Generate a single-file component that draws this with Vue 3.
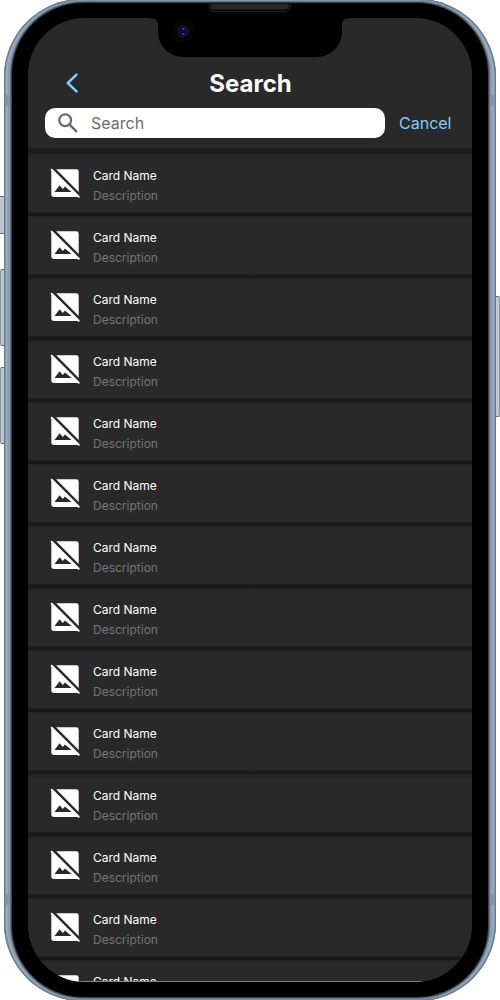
<script setup>
const cards = Array.from({ length: 14 }, (_, i) => ({ id: i, name: 'Card Name', description: 'Description' }))
</script>

<template>
  <main class="stage">
    <i class="key silent"></i>
    <i class="key volume-up"></i>
    <i class="key volume-down"></i>
    <i class="key power"></i>
    <div class="phone">
      <div class="bezel">
        <section class="screen">
          <header class="header">
            <div class="title-row">
              <svg class="back" width="14" height="22" viewBox="0 0 14 22">
                <path d="M11.500 2.700 2.800 11l8.700 8.300" fill="none" stroke="#83c9fb" stroke-width="2.500" stroke-linecap="round" stroke-linejoin="round" />
              </svg>
              <h1>Search</h1>
            </div>
            <div class="search-row">
              <div class="field">
                <svg width="20" height="20" viewBox="0 0 20 20" fill="none" stroke="#6c6c6c">
                  <circle cx="7.200" cy="7.200" r="5.900" stroke-width="2.200" />
                  <path d="m11.400 11.400 7.400 7.400" stroke-width="2.500" />
                </svg>
                <span>Search</span>
              </div>
              <span class="cancel">Cancel</span>
            </div>
          </header>
          <div class="list">
            <article v-for="card in cards" :key="card.id" class="card">
              <svg class="thumb" width="32" height="32" viewBox="0 0 32 32">
                <path fill="#fff" d="M7.200 2.200H27.300Q29.700 2.200 29.700 4.600V25z" />
                <path fill="#fff" d="M2.300 2.600 29.500 29.800Q29 30 28 30H5Q2.300 30 2.300 27.300z" />
                <path d="M2.700 2.800 29.700 29.800" stroke="#fff" stroke-width="2" stroke-linecap="round" />
                <path d="m5.500 25 5.100-6.700 3.200 3.700 2.200-2.600 6.500 5.600z" fill="#292929" />
              </svg>
              <div class="copy">
                <span class="name">{{ card.name }}</span>
                <span class="description">{{ card.description }}</span>
              </div>
            </article>
          </div>
        </section>
      </div>
      <i class="antenna left upper"></i>
      <i class="antenna right upper"></i>
      <i class="antenna left lower"></i>
      <i class="antenna right lower"></i>
    </div>
    <svg class="notch" width="200" height="60" viewBox="0 0 200 60">
      <defs>
        <pattern id="mesh" width="2" height="2" patternUnits="userSpaceOnUse">
          <path fill="#161616" d="M0 0h2v2H0z" />
          <path fill="#363636" d="M0 0h1v1H0zM1 1h1v1H1z" />
        </pattern>
      </defs>
      <path d="M0 4H200V18.500H197Q192 19 192 25V31C192 46 181 57 166 57H34C19 57 8 46 8 31V25Q8 19 3 18.500H0z" />
      <path d="M59.500 3v4q0 4.500 5 4.500h71q5 0 5-4.500V3z" fill="#080808" stroke="#202020" />
      <rect x="61" y="4" width="78" height="5.500" rx="2.750" fill="url(#mesh)" />
      <circle cx="33.200" cy="31.500" r="11" fill="#050507" />
      <circle cx="33.200" cy="31.500" r="6" fill="#10102a" />
      <circle cx="33.200" cy="31.500" r="3.700" fill="#0b0b50" />
      <circle cx="33.200" cy="31.500" r="1.500" fill="#05051b" />
      <circle cx="33.500" cy="28.900" r="1" fill="#5353a6" />
      <circle cx="33.500" cy="34" r="1" fill="#3158a0" />
    </svg>
  </main>
</template>

<style>
body {
  margin: 0;
  background: #fff;
}
</style>

<style scoped>
.stage {
  position: relative;
  width: 500px;
  height: 1000px;
  overflow: hidden;
  background: #fff;
  font-family: Inter, "Liberation Sans", sans-serif;
}
.phone {
  position: relative;
  box-sizing: border-box;
  width: 492px;
  height: 1002px;
  margin: -1px auto 0;
  padding: 4px 8px;
  border-radius: 78px;
  background: #8b9db2;
  box-shadow: inset 0 0 0 1px #66798e, inset 0 0 0 2px #8496aa, inset 2px 0 2px 1px #a9b7c8, inset -2px 0 2px 1px #a9b7c8;
}
.bezel {
  box-sizing: border-box;
  height: 994px;
  padding: 15px 16px 15px;
  border-radius: 71px;
  background: #000;
  box-shadow: 0 0 0 1px #3e454e, 0 0 0 2px #627387;
}
.screen {
  position: relative;
  box-sizing: border-box;
  height: 964px;
  overflow: hidden;
  border-radius: 57px;
  background: #1c1c1c;
}
.screen::after {
  content: "";
  position: absolute;
  left: 50px;
  right: 50px;
  bottom: 0;
  height: 1px;
  background: #858585;
}
.header {
  box-sizing: border-box;
  height: 130px;
  padding: 50px 17px 0;
  background: #292929;
}
.title-row {
  display: grid;
  grid-template-columns: 40px 1fr 40px;
  grid-template-rows: 30px;
  height: 30px;
  align-items: center;
}
.back {
  margin-left: 20px;
}
h1 {
  align-self: start;
  margin: 0;
  padding-left: 1px;
  color: #fff;
  font-size: 24px;
  line-height: 32px;
  font-weight: 700;
  text-align: center;
}
.search-row {
  display: flex;
  align-items: center;
  gap: 14px;
  margin-top: 10px;
}
.field {
  display: flex;
  align-items: center;
  box-sizing: border-box;
  width: 340px;
  height: 30px;
  padding-left: 13px;
  gap: 13px;
  border-radius: 10px;
  background: #fff;
  color: #6c6c6c;
  font-size: 16px;
}
.cancel {
  color: #83c9fb;
  font-size: 16px;
}
.list {
  padding-top: 6px;
}
.card {
  display: flex;
  box-sizing: border-box;
  height: 62px;
  padding: 13px 0 0 21px;
  gap: 12px;
  background: linear-gradient(#222 0, #292929 3px, #292929 58px, #1f1f1f 58px);
  border-bottom: 3px solid #191919;
}
.thumb {
  flex: none;
}
.copy {
  display: flex;
  flex-direction: column;
  font-size: 12px;
  line-height: 20px;
  margin-top: -1px;
}
.name {
  color: #fff;
}
.description {
  color: #757575;
}
.notch {
  position: absolute;
  left: 150px;
  top: 0;
}
.antenna {
  position: absolute;
  width: 5px;
  height: 11px;
  background: #8294a5;
}
.upper {
  top: 96px;
}
.lower {
  top: 895px;
}
.left {
  left: 1px;
}
.right {
  right: 1px;
}
.key {
  position: absolute;
  box-sizing: border-box;
  width: 6px;
  border: 1px solid #8797a8;
  border-top-color: #59697a;
  border-bottom-color: #59697a;
  border-radius: 2px;
  background: #bdc7d2;
}
.silent {
  left: -1px;
  top: 196px;
  height: 38px;
}
.volume-up {
  left: 0;
  top: 269px;
  height: 77px;
}
.volume-down {
  left: 0;
  top: 367px;
  height: 77px;
}
.power {
  right: 0;
  top: 296px;
  height: 121px;
}
</style>
